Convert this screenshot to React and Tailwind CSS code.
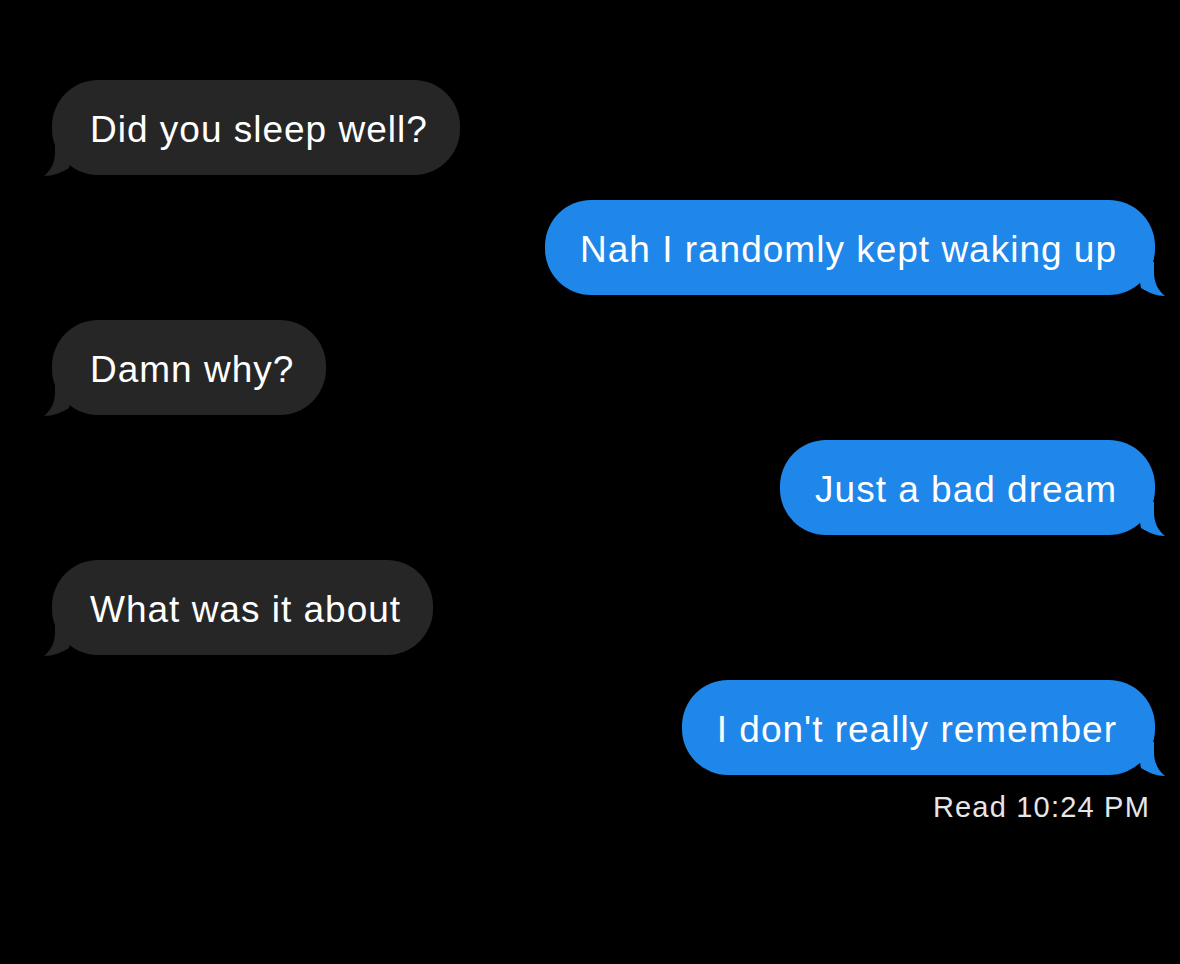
import React from "react";

const font = { fontFamily: '"Liberation Sans", Arial, Helvetica, sans-serif' };

function Bubble({ text, me }) {
  const color = me ? "#1f86ea" : "#262627";
  return (
    <div className={me ? "flex justify-end" : "flex justify-start"}>
      <div
        className={
          "relative h-[95px] rounded-[46px] flex items-center text-[37px] tracking-[1px] text-white " +
          (me ? "bg-[#1f86ea] pl-[35px] pr-[38px]" : "bg-[#262627] pl-[38px] pr-[32px]")
        }
      >
        <span className="relative z-10 leading-none pt-[3px]">{text}</span>
        {me ? (
          <svg
            className="absolute right-[-11px] bottom-[-1px]"
            width="30"
            height="34"
            viewBox="0 0 30 34"
          >
            <path d="M18,0 L18,10 C18,21 22,28 29,34 C21,34 13,31 5,26 L0,0 Z" fill={color} />
          </svg>
        ) : (
          <svg
            className="absolute left-[-8px] bottom-[-1px]"
            width="30"
            height="34"
            viewBox="0 0 30 34"
          >
            <path d="M11,0 L11,10 C11,21 7,28 0,34 C8,34 17,31 25,26 L30,0 Z" fill={color} />
          </svg>
        )}
      </div>
    </div>
  );
}

export default function App() {
  const msgs = [
    { t: "Did you sleep well?", me: false },
    { t: "Nah I randomly kept waking up", me: true },
    { t: "Damn why?", me: false },
    { t: "Just a bad dream", me: true },
    { t: "What was it about", me: false },
    { t: "I don't really remember", me: true },
  ];
  return (
    <div className="w-[1180px] h-[964px] bg-black overflow-hidden" style={font}>
      <div className="flex flex-col gap-[25px] pt-[80px] pl-[52px] pr-[25px]">
        {msgs.map((m, i) => (
          <Bubble key={i} text={m.t} me={m.me} />
        ))}
      </div>
      <div className="flex justify-end pr-[30px] mt-[18px]">
        <span className="text-[29px] tracking-[1.2px] text-[#e6e6e6] leading-none">
          Read 10:24 PM
        </span>
      </div>
    </div>
  );
}
